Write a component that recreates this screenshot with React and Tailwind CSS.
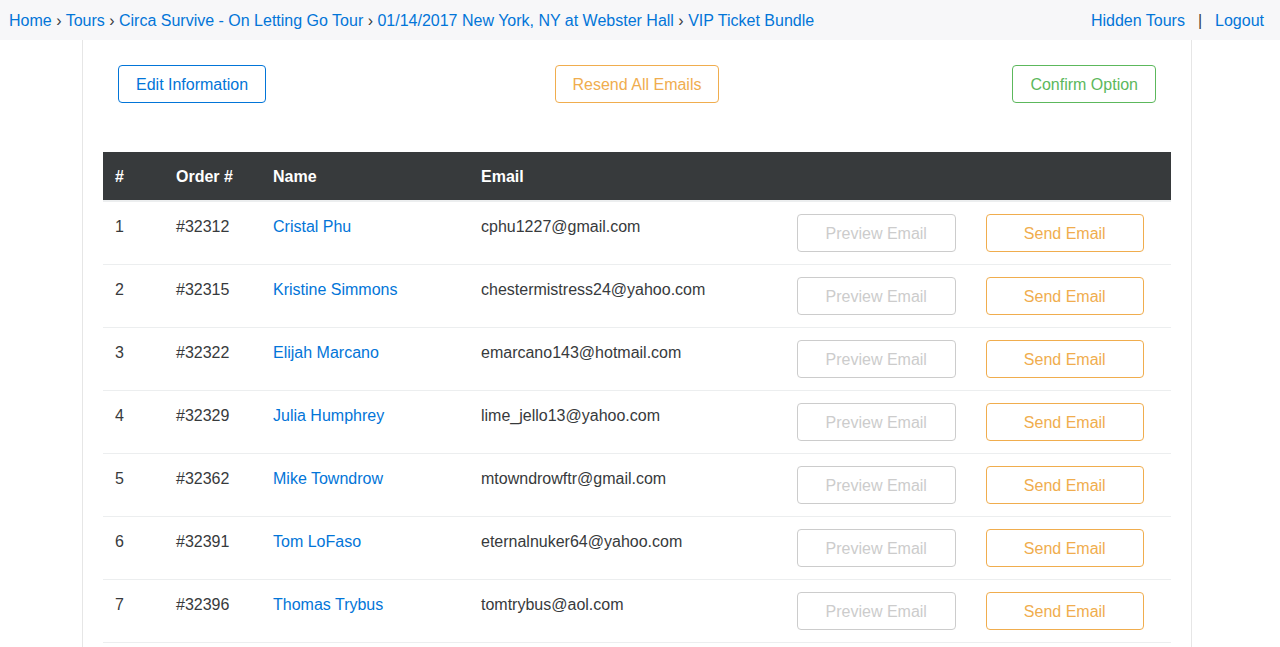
const crumbs = [
  "Home",
  "Tours",
  "Circa Survive - On Letting Go Tour",
  "01/14/2017 New York, NY at Webster Hall",
  "VIP Ticket Bundle",
];

const orders = [
  { order: "#32312", name: "Cristal Phu", email: "cphu1227@gmail.com" },
  { order: "#32315", name: "Kristine Simmons", email: "chestermistress24@yahoo.com" },
  { order: "#32322", name: "Elijah Marcano", email: "emarcano143@hotmail.com" },
  { order: "#32329", name: "Julia Humphrey", email: "lime_jello13@yahoo.com" },
  { order: "#32362", name: "Mike Towndrow", email: "mtowndrowftr@gmail.com" },
  { order: "#32391", name: "Tom LoFaso", email: "eternalnuker64@yahoo.com" },
  { order: "#32396", name: "Thomas Trybus", email: "tomtrybus@aol.com" },
];

const tones = {
  blue: "border-[#0275d8] text-[#0275d8]",
  orange: "border-[#f0ad4e] text-[#f0ad4e]",
  green: "border-[#5cb85c] text-[#5cb85c]",
  gray: "border-[#cccccc] text-[#cccccc]",
};

const cell = "px-3 pt-[13px] pb-[11px]";

function Button({ tone, className = "", children }) {
  return (
    <button
      type="button"
      className={`h-[38px] rounded border bg-white px-[17px] pt-0.5 leading-6 whitespace-nowrap ${tones[tone]} ${className}`}
    >
      {children}
    </button>
  );
}

function Link({ children }) {
  return (
    <a href="#" className="text-[#0275d8] hover:underline">
      {children}
    </a>
  );
}

export default function App() {
  return (
    <div className="flex min-h-screen flex-col bg-white font-['Liberation_Sans',Arial,sans-serif] text-base leading-6 text-[#373a3c]">
      <header className="sticky top-0 z-10 flex min-h-10 items-center justify-between bg-[#f7f7f9] pt-0.5 pr-4 pl-[9px]">
        <nav aria-label="Breadcrumb">
          {crumbs.map((crumb, i) => (
            <span key={crumb}>
              {i > 0 && " › "}
              <Link>{crumb}</Link>
            </span>
          ))}
        </nav>
        <nav aria-label="Account" className="flex gap-[13px]">
          <Link>Hidden Tours</Link>
          <span>|</span>
          <Link>Logout</Link>
        </nav>
      </header>

      <div className="flex flex-1 flex-col pr-[88px] pl-[82px]">
        <main className="w-full flex-1 border-x border-[#e6e6e6] px-5 pt-[25px]">
          <div className="grid grid-cols-3 px-[15px]">
            <Button tone="blue" className="justify-self-start">Edit Information</Button>
            <Button tone="orange" className="justify-self-center">Resend All Emails</Button>
            <Button tone="green" className="justify-self-end">Confirm Option</Button>
          </div>

          <table className="mt-[49px] w-full table-fixed border-separate border-spacing-0 text-left">
            <colgroup>
              <col className="w-[61px]" />
              <col className="w-[97px]" />
              <col className="w-[208px]" />
              <col className="w-[301px]" />
              <col />
            </colgroup>
            <thead className="bg-[#373a3c] text-white">
              <tr>
                <th className={cell}>#</th>
                <th className={cell}>Order #</th>
                <th className={cell}>Name</th>
                <th className={cell}>Email</th>
                <td className={cell} />
              </tr>
            </thead>
            <tbody className="align-top [&>tr:first-child>td]:border-t-2 [&>tr>td]:border-t [&>tr>td]:border-[#eceeef] [&>tr:last-child>td]:border-b">
              {orders.map((row, i) => (
                <tr key={row.order}>
                  <td className={cell}>{i + 1}</td>
                  <td className={cell}>{row.order}</td>
                  <td className={cell}><Link>{row.name}</Link></td>
                  <td className={cell}>{row.email}</td>
                  <td className="p-3">
                    <div className="grid grid-cols-2 gap-[30px] px-[15px]">
                      <Button tone="gray">Preview Email</Button>
                      <Button tone="orange">Send Email</Button>
                    </div>
                  </td>
                </tr>
              ))}
            </tbody>
          </table>
        </main>
      </div>
    </div>
  );
}
